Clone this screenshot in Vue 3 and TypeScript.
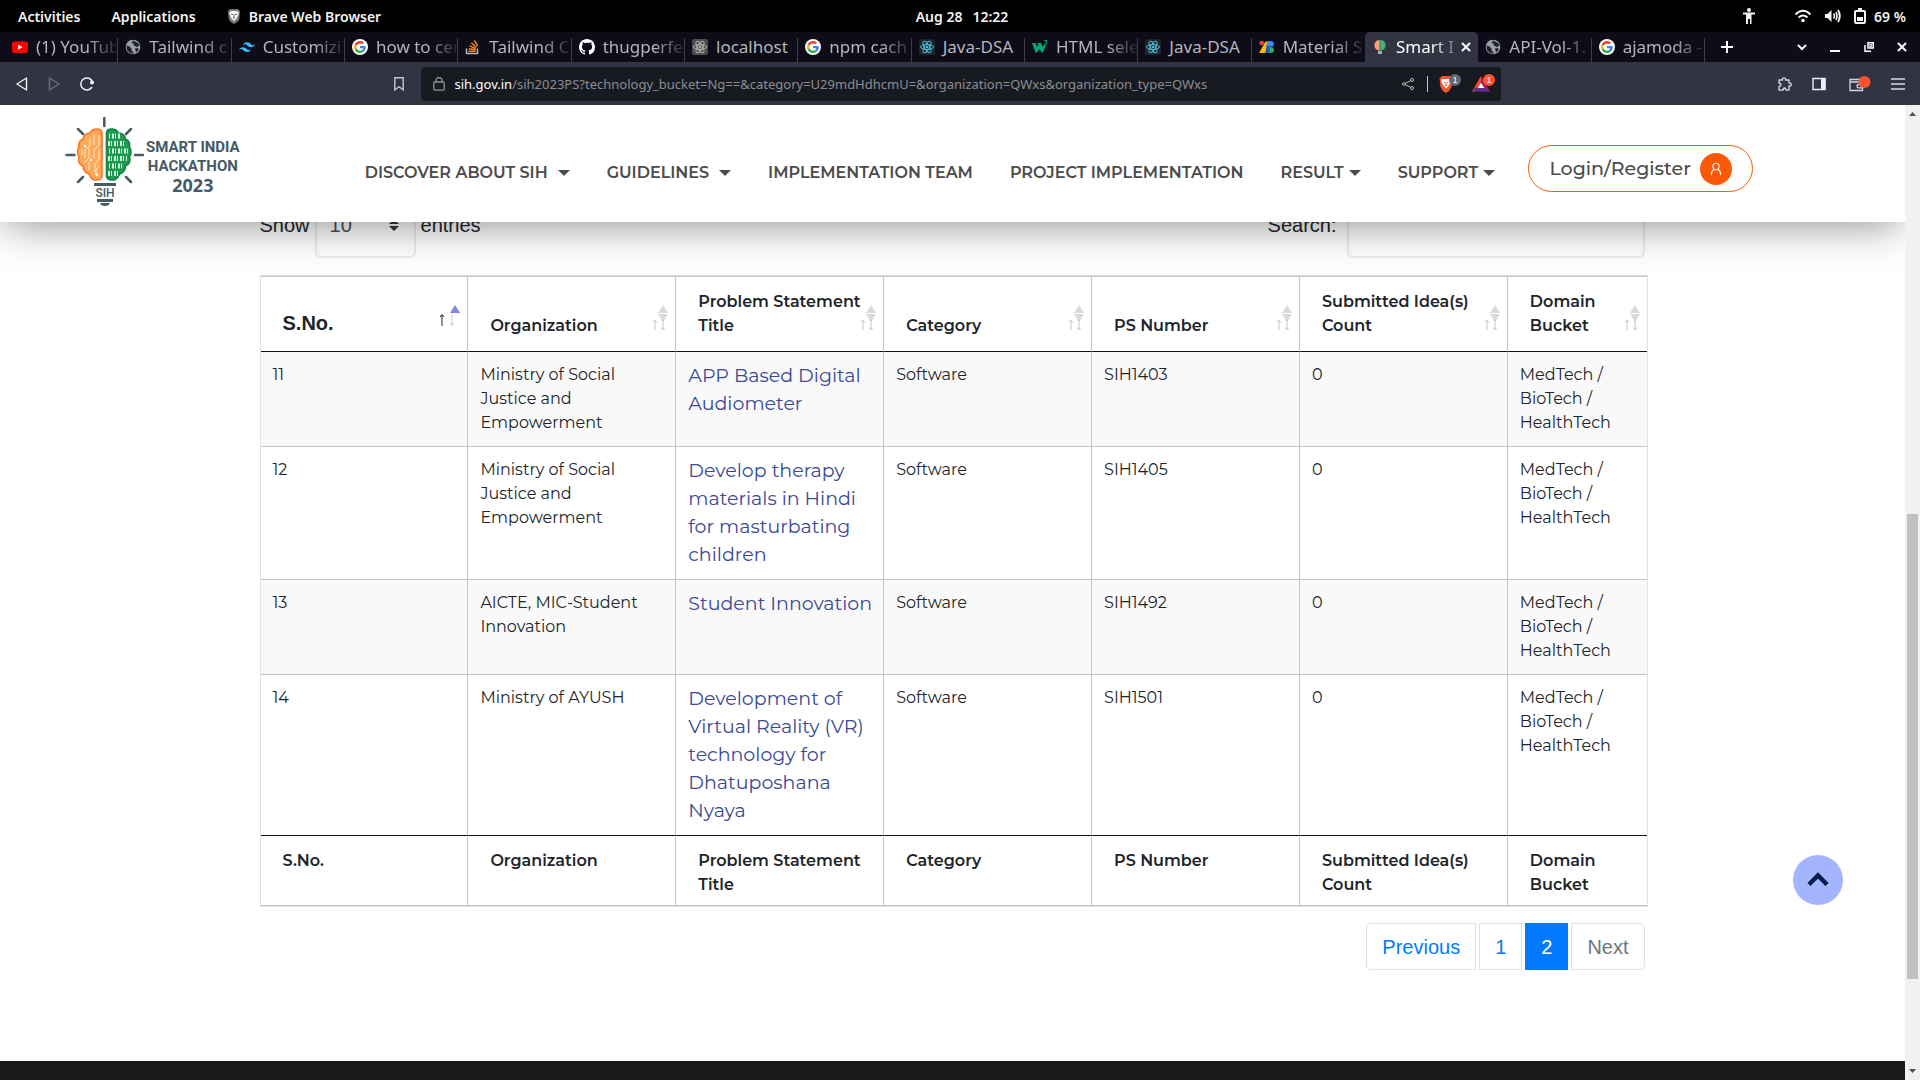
<script setup lang="ts">
import { ref } from 'vue'

interface Tab {
  icon: string
  title: string
  fade?: boolean
  active?: boolean
}

interface Problem {
  no: number
  organization: string
  title: string
  category: string
  ps: string
  ideas: number
  bucket: string
}

const tabs: Tab[] = [
  { icon: 'youtube', title: '(1) YouTub', fade: true },
  { icon: 'globe', title: 'Tailwind c', fade: true },
  { icon: 'tailwind', title: 'Customizi', fade: true },
  { icon: 'google', title: 'how to cer', fade: true },
  { icon: 'stack', title: 'Tailwind C', fade: true },
  { icon: 'github', title: 'thugperfe', fade: true },
  { icon: 'react-grey', title: 'localhost' },
  { icon: 'google', title: 'npm cach', fade: true },
  { icon: 'react', title: 'Java-DSA' },
  { icon: 'w3', title: 'HTML sele', fade: true },
  { icon: 'react', title: 'Java-DSA' },
  { icon: 'material', title: 'Material S', fade: true },
  { icon: 'bulb', title: 'Smart I', fade: true, active: true },
  { icon: 'globe', title: 'API-Vol-1.', fade: true },
  { icon: 'google', title: 'ajamoda -', fade: true },
]

const menu = [
  { label: 'DISCOVER ABOUT SIH', caret: 'wide' },
  { label: 'GUIDELINES', caret: 'wide' },
  { label: 'IMPLEMENTATION TEAM', caret: '' },
  { label: 'PROJECT IMPLEMENTATION', caret: '' },
  { label: 'RESULT', caret: 'tight' },
  { label: 'SUPPORT', caret: 'tight' },
]

const columns = [
  'S.No.',
  'Organization',
  'Problem Statement Title',
  'Category',
  'PS Number',
  'Submitted Idea(s) Count',
  'Domain Bucket',
]

const bucket = 'MedTech / BioTech / HealthTech'
const problems: Problem[] = [
  { no: 11, organization: 'Ministry of Social Justice and Empowerment', title: 'APP Based Digital Audiometer', category: 'Software', ps: 'SIH1403', ideas: 0, bucket },
  { no: 12, organization: 'Ministry of Social Justice and Empowerment', title: 'Develop therapy materials in Hindi for masturbating children', category: 'Software', ps: 'SIH1405', ideas: 0, bucket },
  { no: 13, organization: 'AICTE, MIC-Student Innovation', title: 'Student Innovation', category: 'Software', ps: 'SIH1492', ideas: 0, bucket },
  { no: 14, organization: 'Ministry of AYUSH', title: 'Development of Virtual Reality (VR) technology for Dhatuposhana Nyaya', category: 'Software', ps: 'SIH1501', ideas: 0, bucket },
]

const address = ref('/sih2023PS?technology_bucket=Ng==&category=U29mdHdhcmU=&organization=QWxs&organization_type=QWxs')
const pageSize = ref('10')
const query = ref('')
</script>

<template>
  <div class="screen">
    <div class="desktop-bar">
      <div class="desktop-left">
        <span>Activities</span>
        <span>Applications</span>
        <span class="running">
          <svg width="14" height="16" viewBox="0 0 14 16">
            <path d="M3 1h8l2 2-.6 7.4Q11.500 14 7 16 2.500 14 1.600 10.400L1 3z" fill="#77777b" />
            <path d="M3 3.500l3-.5h2l3 .5.7 2-1.400 3.500-1 2L7 13l-2.300-2-1-2L2.300 5.500z" fill="#fff" />
            <path d="M4 6l2 .6M10 6l-2 .6M7 6.500v3l-1.300 1M7 9.500l1.300 1" stroke="#55555a" fill="none" />
          </svg>
          Brave Web Browser
        </span>
      </div>
      <div class="clock"><span>Aug 28</span><span>12:22</span></div>
      <div class="desktop-right">
        <svg class="access" width="14" height="16" viewBox="0 0 14 16" fill="#f2f2f2">
          <circle cx="7" cy="2" r="2" />
          <path d="M1 4.500h12v2H9.500V16H8v-5H6v5H4V6.500H1z" />
        </svg>
        <svg width="18" height="14" viewBox="0 0 18 14" fill="none" stroke="#f2f2f2" stroke-width="2">
          <path d="M1.500 5.500Q9-2 16.500 5.500M4.500 8.500Q9 4.500 13.500 8.500" />
          <circle cx="9" cy="11.500" r="1.800" fill="#f2f2f2" stroke="none" />
        </svg>
        <svg width="18" height="14" viewBox="0 0 18 14" fill="none" stroke="#f2f2f2" stroke-width="2">
          <path d="M1 5h2.500L7.500 1v12L3.500 9H1z" fill="#f2f2f2" stroke="none" />
          <path d="M9.500 4.500Q11.500 7 9.500 9.500M12 3Q14 7 12 11" stroke-width="1.600" />
          <path d="M14 1Q17.500 7 14 13" />
        </svg>
        <svg width="12" height="16" viewBox="0 0 12 16">
          <path d="M4 0h4v2h2q2 0 2 2v10q0 2-2 2H2q-2 0-2-2V4q0-2 2-2h2zM2 4v10h8V4z" fill="#f2f2f2" fill-rule="evenodd" />
          <path d="M3 9h6v4H3z" fill="#f2f2f2" />
        </svg>
        <span>69 %</span>
      </div>
    </div>

    <div class="tab-strip">
      <div class="tabs">
        <div v-for="(tab, i) in tabs" :key="i" class="tab" :class="{ active: tab.active, plain: tabs[i + 1]?.active }">
          <svg v-if="tab.icon === 'youtube'" class="fav" viewBox="0 0 16 16">
            <rect y="2.500" width="16" height="11.500" rx="2.800" fill="#f00" /><path d="M6.200 5.700v5L10.600 8.200z" fill="#fff" />
          </svg>
          <svg v-else-if="tab.icon === 'globe'" class="fav" viewBox="0 0 16 16">
            <circle cx="8" cy="8" r="7.300" fill="#9aa0a6" />
            <path d="M1.500 6.500l3 1 2 2v2l2 2v1.300L5 14 2 11zM8 1.500L6.500 4l2 .5.500 2L12 8l2.500-1.500L13 4zM10 9.500l3-.500.500 2-2.500 2.500z" fill="#20212b" />
          </svg>
          <svg v-else-if="tab.icon === 'tailwind'" class="fav" viewBox="0 0 24 24">
            <path d="M12 5C8.800 5 6.800 6.600 6 9.800c1.200-1.600 2.600-2.200 4.200-1.800.9.200 1.600.9 2.300 1.700C13.700 10.900 15 12.200 18 12.200c3.200 0 5.200-1.600 6-4.800-1.200 1.600-2.600 2.200-4.200 1.800-.9-.2-1.600-.9-2.300-1.700C16.300 6.300 15 5 12 5zM6 12.200c-3.200 0-5.200 1.600-6 4.800 1.200-1.600 2.600-2.200 4.200-1.800.9.200 1.600.9 2.300 1.700 1.200 1.200 2.500 2.500 5.500 2.500 3.200 0 5.200-1.600 6-4.800-1.200 1.600-2.600 2.200-4.200 1.800-.9-.2-1.600-.9-2.300-1.700C10.300 13.500 9 12.200 6 12.200z" fill="#38bdf8" />
          </svg>
          <svg v-else-if="tab.icon === 'google'" class="fav" viewBox="-8 -8 64 64">
            <circle cx="24" cy="24" r="32" fill="#fff" />
            <path fill="#ea4335" d="M24 9.500c3.540 0 6.710 1.220 9.210 3.600l6.850-6.850C35.900 2.380 30.470 0 24 0 14.620 0 6.510 5.380 2.560 13.220l7.980 6.190C12.430 13.720 17.740 9.500 24 9.500z" />
            <path fill="#4285f4" d="M46.980 24.550c0-1.570-.15-3.090-.38-4.550H24v9.020h12.940c-.58 2.960-2.260 5.480-4.780 7.180l7.730 6c4.510-4.180 7.090-10.360 7.090-17.650z" />
            <path fill="#fbbc05" d="M10.530 28.590c-.48-1.450-.76-2.990-.76-4.590s.27-3.140.76-4.590l-7.980-6.190C.92 16.460 0 20.120 0 24c0 3.880.92 7.540 2.560 10.780l7.970-6.190z" />
            <path fill="#34a853" d="M24 48c6.480 0 11.930-2.130 15.890-5.810l-7.730-6c-2.150 1.450-4.920 2.300-8.160 2.300-6.260 0-11.570-4.220-13.470-9.910l-7.980 6.190C6.510 42.620 14.620 48 24 48z" />
          </svg>
          <svg v-else-if="tab.icon === 'stack'" class="fav" viewBox="0 0 16 16" fill="none">
            <path d="M1.500 9.500v5h11v-5" stroke="#bcbbbb" stroke-width="1.500" />
            <path d="M3.500 12.300h7M3.700 9.700l6.900 1M4.500 6.800l6.300 2.700M6.400 3.900l5.100 4.400M9.300 1.500l3.500 5.500" stroke="#f48024" stroke-width="1.400" />
          </svg>
          <svg v-else-if="tab.icon === 'github'" class="fav" viewBox="0 0 16 16">
            <path fill="#fff" d="M8 0C3.580 0 0 3.580 0 8c0 3.540 2.290 6.530 5.470 7.590.4.070.55-.17.55-.38 0-.19-.01-.82-.01-1.490-2.010.37-2.530-.49-2.690-.94-.09-.23-.48-.94-.82-1.130-.28-.15-.68-.52-.01-.53.63-.01 1.080.58 1.230.82.72 1.210 1.870.87 2.330.66.07-.52.28-.87.51-1.070-1.780-.2-3.640-.89-3.640-3.950 0-.87.31-1.590.82-2.150-.08-.2-.36-1.020.08-2.120 0 0 .67-.21 2.200.82.64-.18 1.320-.27 2-.27s1.360.09 2 .27c1.530-1.040 2.200-.82 2.200-.82.44 1.100.16 1.920.08 2.120.51.56.82 1.270.82 2.150 0 3.070-1.870 3.750-3.650 3.950.29.25.54.73.54 1.480 0 1.070-.01 1.930-.01 2.200 0 .21.15.46.55.38A8.010 8.010 0 0 0 16 8c0-4.420-3.580-8-8-8z" />
          </svg>
          <svg v-else-if="tab.icon.startsWith('react')" class="fav" :class="tab.icon" viewBox="0 0 16 16">
            <rect class="tile" width="16" height="16" rx="2" />
            <g fill="none" stroke="currentColor">
              <ellipse cx="8" cy="8" rx="6.500" ry="2.500" />
              <ellipse cx="8" cy="8" rx="6.500" ry="2.500" transform="rotate(60 8 8)" />
              <ellipse cx="8" cy="8" rx="6.500" ry="2.500" transform="rotate(120 8 8)" />
            </g>
            <circle cx="8" cy="8" r="1.300" fill="currentColor" />
          </svg>
          <svg v-else-if="tab.icon === 'w3'" class="fav" viewBox="0 0 16 16">
            <path d="M0 4h3.500l1.300 4 1.500-2.500L5.800 4h3.400l1.300 4L12 5.500l2 .5-3 7.500H9.500L7.500 9.500 5 13.500H3.500z" fill="#04aa6d" />
            <path d="M12.300 1.500h2.700l-1.200 1.500q1.700.2 1.200 1.500-.8 1.300-2.700.4" fill="none" stroke="#04aa6d" />
          </svg>
          <svg v-else-if="tab.icon === 'material'" class="fav" viewBox="0 0 16 16">
            <circle cx="2.700" cy="4" r="2.300" fill="#ea4335" />
            <path d="M0 14L6.500 2.500H9L6.500 14z" fill="#fbbc04" />
            <path d="M9 2h2.500a3 3 0 0 1 2 5.500H6.500z" fill="#4285f4" />
            <path d="M6.500 14l1.500-7h3.500v7z" fill="#1a56c4" />
            <path d="M10.500 8h1.500a3 3 0 0 1 0 6h-1.500z" fill="#34a853" />
          </svg>
          <svg v-else class="fav" viewBox="0 0 16 16">
            <path d="M7.700 1C3.500 1 2 4.500 2.500 7.500q.5 3 3.700 4h1.500z" fill="#ff9e77" />
            <path d="M8.300 1c4.200 0 5.700 3.500 5.200 6.500q-.5 3-3.700 4H8.300z" fill="#41b57b" />
            <path d="M6 12h4v3H6z" fill="#a5adb5" />
          </svg>
          <span class="tab-title" :class="{ fade: tab.fade }">{{ tab.title }}</span>
          <button v-if="tab.active" class="bare" aria-label="Close tab">
            <svg width="10" height="10" viewBox="0 0 10 10" stroke="#fff" stroke-width="2"><path d="M1 1l8 8M9 1L1 9" /></svg>
          </button>
        </div>
      </div>
      <div class="window-buttons">
        <button class="bare add" aria-label="New tab">
          <svg width="12" height="12" viewBox="0 0 12 12" stroke="#fff" stroke-width="2"><path d="M6 0v12M0 6h12" /></svg>
        </button>
        <button class="bare" aria-label="Search tabs">
          <svg width="10" height="8" viewBox="0 0 10 8" fill="none" stroke="#fff" stroke-width="2"><path d="M1 2l4 4 4-4" /></svg>
        </button>
        <button class="bare" aria-label="Minimize">
          <svg width="10" height="10" viewBox="0 0 10 10" stroke="#fff" stroke-width="2"><path d="M0 9h10" /></svg>
        </button>
        <button class="bare" aria-label="Restore">
          <svg width="10" height="10" viewBox="0 0 10 10" fill="none" stroke="#fff" stroke-width="1.500"><path d="M4 .8h5.300V6H4zM1 3v6.300h6" /><path d="M5.700 2.500h2v2h-2z" stroke-width="1" /></svg>
        </button>
        <button class="bare" aria-label="Close window">
          <svg width="10" height="10" viewBox="0 0 10 10" stroke="#fff" stroke-width="2"><path d="M1 1l8 8M9 1L1 9" /></svg>
        </button>
      </div>
    </div>

    <div class="toolbar">
      <div class="nav-buttons">
        <button class="bare" aria-label="Back">
          <svg width="12" height="14" viewBox="0 0 12 14" fill="none" stroke="#eceef2" stroke-width="1.400" stroke-linejoin="round"><path d="M10.500 1v12L1 7z" /></svg>
        </button>
        <button class="bare" aria-label="Forward">
          <svg width="12" height="14" viewBox="0 0 12 14" fill="none" stroke="#6c6f7c" stroke-width="1.400" stroke-linejoin="round"><path d="M1.500 1v12L11 7z" /></svg>
        </button>
        <button class="bare" aria-label="Reload">
          <svg width="14" height="14" viewBox="0 0 14 14" fill="none" stroke="#eceef2" stroke-width="1.500"><path d="M12.500 5A6 6 0 1 0 12 10" /><circle cx="12" cy="5.500" r="1.300" fill="#eceef2" /></svg>
        </button>
        <button class="bare bookmark" aria-label="Bookmark">
          <svg width="10" height="14" viewBox="0 0 10 14" fill="none" stroke="#c6c9d2" stroke-width="1.400"><path d="M.8.800h8.400v12L5 9.800.8 12.800z" /></svg>
        </button>
      </div>
      <div class="address">
        <svg width="12" height="14" viewBox="0 0 12 14" fill="none" stroke="#8f9197" stroke-width="1.300"><rect x=".8" y="5" width="10.400" height="8.200" rx="1" /><path d="M3 5V3.500a3 3 0 0 1 6 0V5" /></svg>
        <label class="host" for="url">sih.gov.in</label>
        <input id="url" v-model="address" class="path" type="text" />
        <button class="bare" aria-label="Share">
          <svg width="12" height="12" viewBox="0 0 12 12" fill="none" stroke="#b8bac0"><circle cx="1.800" cy="6" r="1.300" /><circle cx="10" cy="2" r="1.500" /><circle cx="10" cy="10" r="1.500" /><path d="M3 5.500l5.600-2.800M3 6.500l5.600 2.800" /></svg>
        </button>
        <span class="divider"></span>
        <button class="bare shield" aria-label="Brave Shields">
          <svg width="24" height="20" viewBox="0 0 24 20">
            <path d="M4 2h8l2.500 2.500L13.500 13Q12 17 8 19 4 17 2.500 13L1.500 4.500z" fill="#fb542b" />
            <path d="M4 5h8l1 2-2 4-3 4-3-4-2-4z" fill="#fff" />
            <path d="M5.500 8l1.500.500M10.500 8L9 8.500M8 8v3l-1.300 1M8 11l1.300 1" stroke="#fb542b" fill="none" />
            <circle cx="17" cy="6" r="6" fill="#62666f" />
            <text x="17" y="9" text-anchor="middle" font-size="9" fill="#fff">1</text>
          </svg>
        </button>
        <button class="bare" aria-label="Brave Rewards">
          <svg width="24" height="20" viewBox="0 0 24 20">
            <path d="M10 2L1 17.500h4L10 8z" fill="#ff4724" /><path d="M10 2l9 15.500h-4L10 8z" fill="#9e1f63" /><path d="M1 17.500h18l-3.500-4h-11z" fill="#662d91" /><path d="M10 8.500l3.300 5.500H6.700z" fill="#fff" />
            <circle cx="18" cy="6" r="6" fill="#fb542b" />
            <text x="18" y="9" text-anchor="middle" font-size="9" fill="#fff">1</text>
          </svg>
        </button>
      </div>
      <div class="tools">
        <button class="bare" aria-label="Extensions">
          <svg width="14" height="14" viewBox="0 0 14 14" fill="none" stroke="#d6d8df" stroke-width="1.300"><path d="M1 3h3.500Q4 .800 6 .800T7.500 3H11v3.200q2.300-.4 2.300 1.400T11 9v4.200H8Q8 11 6.500 11T5 13.200H1V9.500q2-.2 2-1.700T1 6z" stroke-linejoin="round" /></svg>
        </button>
        <button class="bare" aria-label="Sidebar">
          <svg width="14" height="14" viewBox="0 0 14 14"><path d="M1 1.500h12v11H1z" fill="none" stroke="#eceef2" stroke-width="1.400" /><path d="M9 1h4.500v12H9z" fill="#eceef2" /></svg>
        </button>
        <button class="bare wallet" aria-label="Wallet">
          <svg width="22" height="18" viewBox="0 0 22 18" fill="none" stroke="#d6d8df" stroke-width="1.300"><path d="M1 4.500h12.500v11H1zM1 7h12.500M14 9.500H9.500q-1.500 0-1.500 1.700t1.500 1.700H14" /><circle cx="15.500" cy="7" r="6" fill="#fb542b" stroke="none" /></svg>
        </button>
        <button class="bare" aria-label="Menu">
          <svg width="14" height="12" viewBox="0 0 14 12" stroke="#d6d8df" stroke-width="1.300"><path d="M0 1h14M0 6h14M0 11h14" /></svg>
        </button>
      </div>
    </div>

    <div class="viewport">
      <div class="page">
        <header class="site-header">
          <a class="logo" href="#">
            <svg width="82" height="94" viewBox="0 0 82 94">
              <g stroke="#455a64" stroke-width="2.500" stroke-linecap="round">
                <path d="M40.300 5v8M14 16l5 5M67 16l-5 5M2.500 42h8M71 42h8M14 69l5-5M67 69l-5-5" />
              </g>
              <path d="M38 20q0-4-5-4-5 0-7 4-6 0-7 6-5 2-4 8-3 5 0 10-2 6 4 9 0 6 6 8 2 6 7 6 6 0 6-4z" fill="#ffa858" stroke="#f5792a" stroke-width="1.600" />
              <path d="M35 22v10l-5 5v8M26 24v8l-5 5v8M30 22v10M35 36v10l-4 5v8M18 36v6M25 49v8M35 53l-3 4v5M20 50l5-5V35" fill="none" stroke="#fff3df" stroke-width=".9" />
              <circle cx="27" cy="47" r="1.200" fill="#fff" /><circle cx="21" cy="33" r="1.200" fill="#fff" /><circle cx="33" cy="62" r="1.200" fill="#fff" />
              <path d="M42.500 20q0-4 5-4 5 0 7 4 6 0 7 6 5 2 4 8 3 5 0 10 2 6-4 9 0 6-6 8-2 6-7 6-6 0-6-4z" fill="#1f9a50" stroke="#118342" stroke-width="1.600" />
              <g stroke="#d4f1dd" stroke-width="5">
                <path d="M45 23h11" stroke-dasharray="1 2 2 1" /><path d="M44 30.500h17" stroke-dasharray="2 1 1 2" /><path d="M45 38h19" stroke-dasharray="1 2 2 1" />
                <path d="M44 45.500h19" stroke-dasharray="2 1 1 2" /><path d="M45 53h15" stroke-dasharray="1 2 2 1" /><path d="M44 60.500h10" stroke-dasharray="2 1 1 2" />
              </g>
              <path d="M30 70h22v3H30zM33 86h16v3H33zM36 90h10q-1 3-5 3t-5-3z" fill="#455a64" />
              <text x="41" y="84" text-anchor="middle" font-size="12" font-weight="500" fill="#455a64" font-family="Roboto, sans-serif">SIH</text>
            </svg>
            <span class="logo-text"><span>SMART INDIA</span><span>HACKATHON</span><span class="year">2023</span></span>
          </a>
          <nav class="menu">
            <a v-for="item in menu" :key="item.label" href="#" :class="item.caret">
              {{ item.label }}<i v-if="item.caret" class="caret"></i>
            </a>
          </nav>
          <a class="login" href="#">
            Login/Register
            <span class="avatar">
              <svg width="12" height="14" viewBox="0 0 12 14" fill="none" stroke="#fff" stroke-width="1.100"><circle cx="6" cy="4.500" r="3.200" /><path d="M1.500 13V11.500Q1.500 8.500 4.500 7.500M10.500 13V11.500Q10.500 8.500 7.500 7.500" /></svg>
            </span>
          </a>
        </header>

        <main class="content">
          <div class="controls">
            <div class="control">
              <label for="length">Show</label>
              <span class="select-wrap">
                <select id="length" v-model="pageSize"><option>10</option><option>25</option><option>50</option></select>
                <svg width="10" height="12" viewBox="0 0 10 12" fill="#343a40"><path d="M0 5l5-5 5 5zM0 7l5 5 5-5z" /></svg>
              </span>
              <label for="length">entries</label>
            </div>
            <div class="control search">
              <label for="search">Search:</label>
              <input id="search" v-model="query" type="search" />
            </div>
          </div>

          <table>
            <thead>
              <tr>
                <th v-for="(c, i) in columns" :key="c" scope="col" :class="{ sorted: i === 0 }">
                  <button class="sort">{{ c }}</button>
                  <svg v-if="i === 0" class="arrows" width="24" height="30" viewBox="0 0 24 30">
                    <path d="M17 1l5 8H12z" fill="#7f86de" />
                    <path d="M4 22V11M2 13l2-2.500L6 13" fill="none" stroke="#212529" />
                    <path d="M14 10v11M12 19l2 2.500 2-2.500" fill="none" stroke="#c4c6c8" />
                  </svg>
                  <svg v-else class="arrows" width="24" height="30" viewBox="0 0 24 30">
                    <path d="M17 1l5 8H12zM17 18l5-8H12z" fill="#d9d9d9" />
                    <path d="M9 26V16.500M7 18.500l2-2.500 2 2.500M17 16v9.500M15 23.500l2 2.500 2-2.500" fill="none" stroke="#c4c6c8" />
                  </svg>
                </th>
              </tr>
            </thead>
            <tbody>
              <tr v-for="p in problems" :key="p.no">
                <td>{{ p.no }}</td>
                <td>{{ p.organization }}</td>
                <td class="title"><a href="#">{{ p.title }}</a></td>
                <td>{{ p.category }}</td>
                <td>{{ p.ps }}</td>
                <td>{{ p.ideas }}</td>
                <td>{{ p.bucket }}</td>
              </tr>
            </tbody>
            <tfoot>
              <tr><th v-for="c in columns" :key="c" scope="col">{{ c }}</th></tr>
            </tfoot>
          </table>

          <nav class="pagination" aria-label="Pages">
            <button>Previous</button>
            <button>1</button>
            <button class="current" aria-current="page">2</button>
            <button disabled>Next</button>
          </nav>
        </main>
        <footer class="site-footer"></footer>
        <button class="to-top" aria-label="Back to top">
          <svg width="22" height="16" viewBox="0 0 22 16" fill="none" stroke="#00204a" stroke-width="4.500"><path d="M2 12.500l9-9 9 9" /></svg>
        </button>
      </div>
      <div class="scrollbar">
        <svg width="9" height="5" viewBox="0 0 9 5"><path d="M1 5l3.500-4L8 5z" fill="#505050" /></svg>
        <div class="track"><div class="thumb"></div></div>
        <svg width="9" height="5" viewBox="0 0 9 5"><path d="M1 0l3.500 4L8 0z" fill="#505050" /></svg>
      </div>
    </div>
  </div>
</template>

<style>
body {
  margin: 0;
  background: #fff;
}
</style>

<style scoped>
* {
  box-sizing: border-box;
}

.screen {
  display: flex;
  flex-direction: column;
  min-height: 100vh;
  font-family: "Noto Sans", sans-serif;
}

.bare {
  display: flex;
  align-items: center;
  justify-content: center;
  padding: 0;
  border: 0;
  background: none;
}

svg {
  flex: none;
  display: block;
}

/* desktop bar */
.desktop-bar {
  display: grid;
  grid-template-columns: 1fr auto 1fr;
  align-items: center;
  height: 32px;
  padding: 0 14px 0 18px;
  background: #000;
  color: #f2f2f2;
  font-size: 14px;
  font-weight: 600;
}

.desktop-left {
  display: flex;
  gap: 31px;
}

.running {
  display: flex;
  align-items: center;
  gap: 8px;
}

.clock {
  display: flex;
  gap: 10px;
}

.desktop-right {
  display: flex;
  align-items: center;
  justify-content: flex-end;
  gap: 12px;
}

.desktop-right span {
  margin-left: -4px;
}

.access {
  margin-right: 26px;
}

/* tabs */
.tab-strip {
  display: flex;
  height: 30px;
  background: #0d0c18;
}

.tabs {
  display: grid;
  flex: 1;
  grid-auto-columns: minmax(0, 1fr);
  grid-auto-flow: column;
  min-width: 0;
  padding-left: 5px;
}

.tab {
  display: flex;
  align-items: center;
  padding: 0 0 0 7px;
  border-right: 1px solid;
  border-image: linear-gradient(transparent 7px, #3f3f48 7px) 1;
  color: #b5b6bc;
  font-size: 17px;
  line-height: 30px;
}

.tab.plain {
  border-color: transparent;
  border-image: none;
}

.tab.active {
  padding: 0 7px;
  border: 0;
  border-image: none;
  border-radius: 5px 5px 0 0;
  background: #323443;
  color: #fff;
}

.fav {
  width: 16px;
  height: 16px;
}

.react {
  color: #4fb9d4;
}

.react .tile {
  fill: #20232a;
}

.react-grey {
  color: #b0b0b0;
}

.react-grey .tile {
  fill: #4c4c4c;
}

.tab-title {
  flex: 1;
  min-width: 0;
  margin-left: 8px;
  white-space: nowrap;
}

.fade {
  mask-image: linear-gradient(90deg, #000 calc(100% - 30px), rgba(0, 0, 0, 0.1));
}

.window-buttons {
  display: flex;
  align-items: center;
  justify-content: space-between;
  width: 215px;
  padding: 0 13px 0 16px;
}

.add {
  margin-right: 40px;
}

/* toolbar */
.toolbar {
  display: flex;
  align-items: center;
  height: 43px;
  padding: 0 15px 0 16px;
  background: #323443;
}

.nav-buttons {
  display: flex;
  flex: 1;
  gap: 20px;
}

.bookmark {
  margin: 0 17px 0 auto;
}

.address {
  display: flex;
  align-items: center;
  flex: 0 1 1080px;
  min-width: 0;
  height: 34px;
  padding: 0 6px 0 12px;
  border-radius: 4px;
  background: #181a21;
  font-size: 13px;
}

.host {
  margin-left: 10px;
  color: #fff;
}

.path {
  flex: 1;
  min-width: 0;
  padding: 0;
  border: 0;
  outline: 0;
  background: none;
  color: #8c8d91;
  font: inherit;
}

.divider {
  width: 1px;
  height: 16px;
  margin: 0 10px 0 13px;
  background: #c5c6ca;
}

.shield {
  margin-right: 9px;
}

.tools {
  display: flex;
  flex: 1;
  align-items: center;
  justify-content: flex-end;
  gap: 20px;
}

.wallet {
  margin-left: 3px;
}

/* page */
.viewport {
  display: flex;
  flex: 1;
}

.page {
  position: relative;
  display: flex;
  flex: 1;
  flex-direction: column;
  min-width: 0;
  overflow: hidden;
  background: #fff;
  color: #212529;
  font-family: Montserrat, Inter, sans-serif;
}

.site-header {
  position: absolute;
  top: 0;
  left: 0;
  right: 0;
  z-index: 1;
  display: flex;
  align-items: center;
  height: 117px;
  padding: 0 152px 0 64px;
  background: #fff;
  box-shadow: 0 5px 45px -5px rgba(0, 0, 0, 0.5);
}

.logo {
  display: flex;
  align-items: center;
  margin-bottom: 8px;
  text-decoration: none;
}

.logo-text {
  display: flex;
  flex-direction: column;
  align-items: center;
  padding-top: 12px;
  color: #455a64;
  font: 700 15px/19px Roboto, sans-serif;
}

.logo-text .year {
  font: 700 18px/18px "Noto Sans", sans-serif;
}

.menu {
  display: flex;
  flex: 1;
  gap: 37px;
  margin: 18px 0 0 125px;
}

.menu a {
  display: flex;
  align-items: center;
  gap: 10px;
  color: #4b4b4b;
  font-size: 16px;
  font-weight: 600;
  line-height: 24px;
  text-decoration: none;
  white-space: nowrap;
}

.menu a.tight {
  gap: 5px;
}

.caret {
  border: 6px solid transparent;
  border-top-color: #4b4b4b;
  border-bottom: 0;
}

.login {
  display: flex;
  align-items: center;
  gap: 9px;
  height: 47px;
  margin-top: 10px;
  padding: 0 20px;
  border: 1px solid #fa5a05;
  border-radius: 24px;
  color: #4b4b4b;
  font-size: 19px;
  font-weight: 500;
  text-decoration: none;
}

.avatar {
  display: flex;
  align-items: center;
  justify-content: center;
  width: 32px;
  height: 32px;
  border-radius: 50%;
  background: #fa5a05;
}

.content {
  width: 100%;
  max-width: 1390px;
  margin: 0 auto;
  padding: 87px 0 0 2px;
}

.controls {
  display: flex;
  justify-content: space-between;
  padding-right: 3px;
  font: 20px/30px "Liberation Sans", Arial, sans-serif;
}

.control {
  display: flex;
  align-items: center;
  gap: 5px;
}

.search {
  gap: 10px;
}

.select-wrap {
  display: flex;
  align-items: center;
  width: 101px;
  height: 66px;
  padding: 0 15px 0 13px;
  border: 2px solid #e9ecef;
  border-radius: 6px;
}

.select-wrap select {
  flex: 1;
  appearance: none;
  padding: 0;
  border: 0;
  background: none;
  color: #495057;
  font: inherit;
}

.search input {
  width: 298px;
  height: 66px;
  border: 2px solid #e9ecef;
  border-radius: 6px;
  background: none;
  font: inherit;
}

table {
  width: 100%;
  margin-top: 17px;
  border: 1px solid #dee2e6;
  border-spacing: 0;
  table-layout: fixed;
  font-size: 16px;
  line-height: 24px;
}

th,
td {
  width: 15%;
  border: 0 solid #c1c4ca;
  border-right-width: 1px;
  text-align: left;
}

th:last-child,
td:last-child {
  width: 10%;
  border-right-width: 0;
}

thead th {
  position: relative;
  height: 76px;
  padding: 12px 22px 13px;
  border-top: 1px solid #c1c4ca;
  border-bottom: 1px solid #111;
  vertical-align: bottom;
  font-weight: 600;
}

.sort {
  display: block;
  padding: 0;
  border: 0;
  background: none;
  color: inherit;
  font: inherit;
  text-align: left;
}

.sorted .sort {
  font: 700 20px/30px "Liberation Sans", Arial, sans-serif;
}

.arrows {
  position: absolute;
  right: 5px;
  top: 27px;
}

td {
  height: 95px;
  padding: 11px 12px 10px;
  border-bottom-width: 1px;
  vertical-align: top;
}

tbody tr:nth-child(odd) {
  background: #f9f9f9;
}

tbody tr:last-child td {
  border-bottom-color: #111;
}

.title {
  padding: 10px 8px 10px 12px;
  font-size: 19px;
  line-height: 28px;
}

.title a {
  color: #3b4a95;
  text-decoration: none;
}

tfoot th {
  height: 70px;
  padding: 13px 22px 8px;
  border-bottom: 1px solid #c1c4ca;
  vertical-align: top;
  font-weight: 600;
}

.pagination {
  display: flex;
  justify-content: flex-end;
  gap: 3px;
  padding: 16px 3px 0 0;
}

.pagination button {
  height: 47px;
  padding: 0 15px;
  border: 1px solid #dee2e6;
  background: #fff;
  color: #007bff;
  font: 20px/30px "Liberation Sans", Arial, sans-serif;
}

.pagination button:first-child {
  border-radius: 5px 0 0 5px;
}

.pagination button:last-child {
  border-radius: 0 5px 5px 0;
  color: #6c757d;
}

.pagination .current {
  border-color: #007bff;
  background: #007bff;
  color: #fff;
}

.site-footer {
  height: 19px;
  margin-top: auto;
  background: #191919;
}

.to-top {
  position: absolute;
  right: 62px;
  bottom: 175px;
  display: flex;
  align-items: center;
  justify-content: center;
  width: 50px;
  height: 50px;
  border: 0;
  border-radius: 50%;
  background: #a5b4ff;
}

.scrollbar {
  display: flex;
  flex-direction: column;
  align-items: center;
  justify-content: space-between;
  width: 15px;
  padding: 6px 0;
  background: #f1f1f1;
}

.track {
  display: flex;
  flex: 1;
  flex-direction: column;
  justify-content: flex-end;
  padding: 10px 0 90px;
}

.thumb {
  width: 11px;
  height: 465px;
  background: #c1c1c1;
}
</style>
